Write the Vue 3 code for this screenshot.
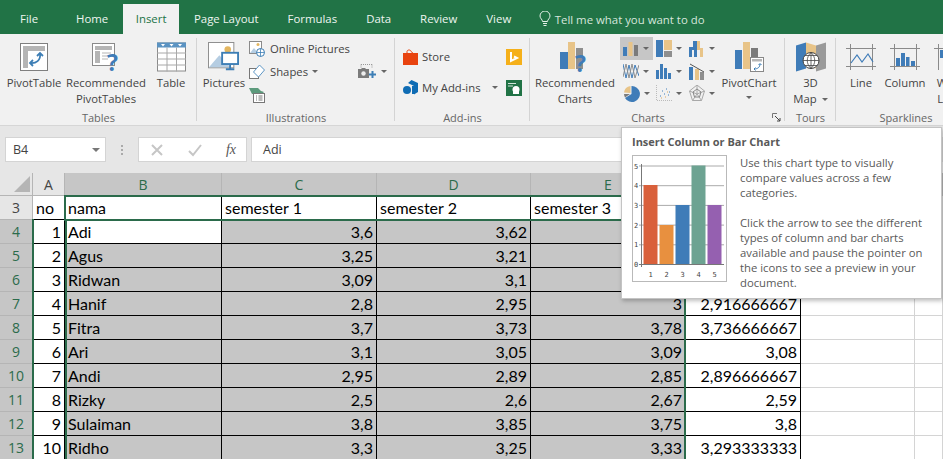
<script setup>
const tabs = ['File', 'Home', 'Insert', 'Page Layout', 'Formulas', 'Data', 'Review', 'View']
const cols = ['A', 'B', 'C', 'D', 'E', 'F', 'G', 'H']
const rows = [
  ['1', 'Adi', '3,6', '3,62', '', ''],
  ['2', 'Agus', '3,25', '3,21', '', ''],
  ['3', 'Ridwan', '3,09', '3,1', '', ''],
  ['4', 'Hanif', '2,8', '2,95', '3', '2,916666667'],
  ['5', 'Fitra', '3,7', '3,73', '3,78', '3,736666667'],
  ['6', 'Ari', '3,1', '3,05', '3,09', '3,08'],
  ['7', 'Andi', '2,95', '2,89', '2,85', '2,896666667'],
  ['8', 'Rizky', '2,5', '2,6', '2,67', '2,59'],
  ['9', 'Sulaiman', '3,8', '3,85', '3,75', '3,8'],
  ['10', 'Ridho', '3,3', '3,25', '3,33', '3,293333333']
]
const bars = [
  { x: 11.5, y: 30, c: '#d9603b' },
  { x: 27.5, y: 70, c: '#e8903f' },
  { x: 43.5, y: 50, c: '#3f7cb8' },
  { x: 59.5, y: 10.5, c: '#6da392' },
  { x: 75.5, y: 50, c: '#9560b0' }
]
</script>

<template>
  <div class="app">
    <nav class="tabs">
      <span
        v-for="t in tabs"
        :key="t"
        class="tab"
        :class="{ active: t === 'Insert', first: t === 'File' }"
      >{{ t }}</span>
      <span class="tell">
        <svg width="12" height="16" viewBox="0 0 12 16" fill="none" stroke="#e4efe8" stroke-width="1">
          <path d="M3.5 10.5C3.5 8.5 1 7.5 1 5a5 5 0 0 1 10 0c0 2.500-2.500 3.500-2.500 5.500z" />
          <path d="M4 12.500h4M4.500 14.500h3" />
        </svg>
        Tell me what you want to do
      </span>
    </nav>

    <section class="ribbon">
      <div class="group g-tables">
        <div class="body">
          <div class="big w60">
            <svg class="ic" width="30" height="30" viewBox="0 0 30 30">
              <rect x="1.500" y="1.500" width="27" height="27" fill="#fff" stroke="#7f7f7f" />
              <rect x="4" y="4" width="22" height="5" fill="#b5b5b5" />
              <rect x="4" y="9" width="5" height="17" fill="#b5b5b5" />
              <path d="M11 21c6 1 11-3 10-9M18 14l3-3 3 3M14 18l-3 3 3 3" fill="none" stroke="#3d7eb5" stroke-width="1.800" />
            </svg>
            <span>PivotTable</span>
          </div>
          <div class="big w84">
            <svg class="ic" width="30" height="30" viewBox="0 0 30 30">
              <rect x="1.500" y="1.500" width="22" height="22" fill="#fff" stroke="#8a8a8a" />
              <rect x="4" y="4" width="17" height="4" fill="#b5b5b5" />
              <rect x="4" y="9" width="5" height="12" fill="#b5b5b5" />
              <path d="M11 11h9M11 14h9M11 17h6" stroke="#b5b5b5" />
              <text x="16" y="29" class="qm">?</text>
            </svg>
            <span>Recommended<br />PivotTables</span>
          </div>
          <div class="big w46">
            <svg class="ic" width="29" height="29" viewBox="0 0 29 29">
              <rect x="0.500" y="0.500" width="28" height="28" fill="#fff" stroke="#8a8a8a" />
              <rect x="0" y="0" width="29" height="5" fill="#5b93c2" />
              <path d="M4 1.500h4l-2 2.500zM12.500 1.500h4l-2 2.500zM21 1.500h4l-2 2.500z" fill="#fff" />
              <path d="M0 10.500h29M0 16.500h29M0 22.500h29M10 5v24M19.500 5v24" stroke="#a8a8a8" />
            </svg>
            <span>Table</span>
          </div>
        </div>
        <div class="glabel">Tables</div>
      </div>

      <div class="group g-illus">
        <div class="body">
          <div class="big w50">
            <svg class="ic" width="34" height="32" viewBox="0 0 34 32">
              <rect x="0.500" y="0.500" width="27" height="27" fill="#fff" stroke="#8a8a8a" />
              <circle cx="21" cy="8" r="3.500" fill="#e3b660" />
              <path d="M1 27l11-13 12 13z" fill="#b5cde2" />
              <rect x="15" y="11.500" width="17" height="12" fill="#fff" stroke="#3d7eb5" stroke-width="2" />
              <path d="M23.500 24v4M19 29h9" stroke="#3d7eb5" stroke-width="2" />
            </svg>
            <span>Pictures</span>
          </div>
          <div class="small-col">
            <div class="small">
              <svg width="16" height="16" viewBox="0 0 16 16">
                <rect x="0.500" y="0.500" width="12" height="12" fill="#fff" stroke="#8a8a8a" />
                <circle cx="9" cy="3.500" r="1.500" fill="#e3b660" />
                <path d="M1 12l4-5 4 5z" fill="#b5cde2" />
                <circle cx="11.500" cy="11.500" r="4" fill="#fff" stroke="#3d7eb5" />
                <path d="M7.500 11.500h8M11.500 7.500v8" stroke="#3d7eb5" stroke-width=".8" />
              </svg>
              Online Pictures
            </div>
            <div class="small">
              <svg width="16" height="16" viewBox="0 0 16 16" fill="#fff">
                <rect x="0.500" y="4.500" width="9" height="10" stroke="#777" />
                <path d="M10.500 1l5 5-6 7-5-5z" stroke="#5d95c4" />
              </svg>
              Shapes<i class="caret shapes-caret" />
            </div>
            <div class="small">
              <svg width="16" height="16" viewBox="0 0 16 16">
                <path d="M0 1h9l3 3 3 1-2 2H3z" fill="#5c9a7c" />
                <rect x="4.500" y="6.500" width="11" height="9" fill="#fff" stroke="#777" />
                <path d="M7 9h1M7 11h1M7 13h1M9.500 9h4M9.500 11h4M9.500 13h4" stroke="#777" />
              </svg>
            </div>
          </div>
          <div class="shot">
            <svg width="18" height="15" viewBox="0 0 18 15">
              <path d="M3 .5h11M3 .5v3M14 .5v3" stroke="#999" stroke-dasharray="1 1" fill="none" />
              <path d="M0 5h3l1-1h3l1 1h3v9H0z" fill="#7b7b7b" />
              <circle cx="5.500" cy="9.500" r="2.200" fill="#eee" />
              <path d="M11 10.500h7M14.500 7v7" stroke="#3d7eb5" stroke-width="2" />
            </svg>
            <i class="caret" />
          </div>
        </div>
        <div class="glabel">Illustrations</div>
      </div>

      <div class="group g-addins">
        <div class="body addins">
          <div class="addin-row">
            <svg width="15" height="16" viewBox="0 0 15 16">
              <path d="M0 4h15v12H0z" fill="#e8430f" />
              <path d="M4 5V2.500C4 .5 8 .5 8 2.500L11 5" fill="none" stroke="#e8430f" />
            </svg>
            <span>Store</span>
          </div>
          <svg width="16" height="16" viewBox="0 0 16 16">
            <rect width="16" height="16" fill="#f5b01a" />
            <path d="M5 3v9l6-3-3-1.500" fill="none" stroke="#fff" stroke-width="2" />
          </svg>
          <div class="addin-row">
            <svg width="15" height="15" viewBox="0 0 15 15" fill="#0f6cb4">
              <path d="M8.500 0L15 3v9l-4 2.500V6L5 3z" />
              <circle cx="4" cy="10" r="4" />
              <rect x="9" y="6" width="3" height="8" />
            </svg>
            <span>My Add-ins</span>
            <i class="caret addin-caret" />
          </div>
          <svg width="16" height="16" viewBox="0 0 16 16">
            <rect width="16" height="16" fill="#217346" />
            <path d="M2 3.500h8M2 6h5" stroke="#cfe3d7" />
            <circle cx="10" cy="9.500" r="3.500" fill="#fff" />
            <rect x="7" y="11" width="6" height="3" fill="#fff" />
          </svg>
        </div>
        <div class="glabel">Add-ins</div>
      </div>

      <div class="group g-charts">
        <div class="body">
          <div class="big w90">
            <svg class="ic" width="30" height="30" viewBox="0 0 30 30">
              <rect x="0" y="10" width="8" height="17" fill="#3f7cb8" />
              <rect x="8" y="0" width="7" height="27" fill="#e8c488" />
              <rect x="16" y="6" width="7" height="21" fill="#8f8f8f" />
              <text x="15" y="30" class="qm">?</text>
            </svg>
            <span>Recommended<br />Charts</span>
          </div>
          <div class="chart-grid">
            <div class="cg hl">
              <svg width="16" height="14" viewBox="0 0 16 14">
                <rect x="0" y="5" width="4" height="9" fill="#3f7cb8" />
                <rect x="5.500" y="0" width="4" height="14" fill="#e8c488" />
                <rect x="11" y="3" width="4" height="11" fill="#7b7b7b" />
              </svg>
              <i class="caret" />
            </div>
            <div class="cg">
              <svg width="16" height="17" viewBox="0 0 16 17">
                <rect x="0" y="0" width="7" height="17" fill="#3f7cb8" />
                <rect x="8" y="0" width="8" height="10" fill="#e8c488" />
                <rect x="8" y="11" width="8" height="6" fill="#8f8f8f" />
              </svg>
              <i class="caret" />
            </div>
            <div class="cg">
              <svg width="16" height="16" viewBox="0 0 16 16">
                <path d="M0 16V6h4V0h4v16H5V9H3v7z" fill="#3f7cb8" />
                <path d="M8 0h3v7h3v9h-3V9H8z" fill="#e8c488" />
              </svg>
              <i class="caret" />
            </div>
            <div class="cg">
              <svg width="16" height="16" viewBox="0 0 16 16" fill="none">
                <path d="M0 1l3 14 3-13 3 13 3-13 4 11" stroke="#3f7cb8" />
                <path d="M0 14l3-13 3 14 3-14 3 14 4-13" stroke="#8f8f8f" />
              </svg>
              <i class="caret" />
            </div>
            <div class="cg">
              <svg width="16" height="15" viewBox="0 0 16 15" fill="#3f7cb8">
                <rect x="0" y="6" width="3" height="9" />
                <rect x="4" y="0" width="3" height="15" />
                <rect x="8" y="4" width="3" height="11" />
                <rect x="12" y="9" width="3" height="6" />
              </svg>
              <i class="caret" />
            </div>
            <div class="cg">
              <svg width="16" height="17" viewBox="0 0 16 17">
                <rect x="0" y="4" width="4" height="13" fill="#3f7cb8" />
                <rect x="6" y="6" width="4" height="11" fill="#e8c488" />
                <rect x="11" y="9" width="4" height="8" fill="#8f8f8f" />
                <path d="M1 1l7 4 7 4" stroke="#555" fill="none" />
              </svg>
              <i class="caret" />
            </div>
            <div class="cg">
              <svg width="17" height="17" viewBox="0 0 17 17">
                <path d="M8.500 1A8 8 0 1 1 2 13L8.500 9z" fill="#3f7cb8" />
                <path d="M7.500 8V1A7.500 7.500 0 0 0 1 7.500z" fill="#e8c488" />
                <path d="M1 9h6l-5 3.500A8 8 0 0 1 1 9z" fill="#7b7b7b" />
              </svg>
              <i class="caret" />
            </div>
            <div class="cg">
              <svg width="16" height="16" viewBox="0 0 16 16">
                <path d="M.5 0v15.500H16" stroke="#bbb" fill="none" stroke-dasharray="1 1" />
                <path d="M4 11h1M6 6h1M8 9h1M10 4h1M12 10h1M13 7h1" stroke="#3f7cb8" />
                <path d="M5 13h1M9 12h1M11 7h1" stroke="#d9a860" />
              </svg>
              <i class="caret" />
            </div>
            <div class="cg">
              <svg width="16" height="16" viewBox="0 0 16 16" fill="none" stroke="#a8a8a8">
                <path d="M8 0l7.500 6-3 9.500h-9L.5 6z" />
                <path d="M8 0v9M.5 6L8 9l7.500-3M3.500 15.500L8 9l4.500 6.500" />
                <path d="M8 4l4 3-1.500 5h-5L4 7z" stroke="#888" />
              </svg>
              <i class="caret" />
            </div>
          </div>
          <div class="big w60">
            <svg class="ic" width="30" height="30" viewBox="0 0 30 30">
              <rect x="1" y="8" width="7" height="19" fill="#3f7cb8" />
              <rect x="9" y="0" width="7" height="27" fill="#e8c488" />
              <rect x="17" y="6" width="7" height="21" fill="#7b7b7b" />
              <rect x="16.500" y="15.500" width="13" height="14" fill="#fff" stroke="#888" />
              <rect x="18" y="17" width="10" height="2.500" fill="#b5b5b5" />
              <path d="M20 27c4 0 6-2 6-5M24.500 23l1.500-1.500 1.500 1.500M21.500 25.500L20 27l1.500 1.500" fill="none" stroke="#3d7eb5" />
            </svg>
            <span>PivotChart</span>
            <i class="caret pivot-caret" />
          </div>
        </div>
        <div class="glabel charts-label">Charts</div>
        <svg class="launcher" width="9" height="9" viewBox="0 0 9 9" fill="none" stroke="#777">
          <path d="M.5 5V.5H5" />
          <path d="M3 3l5 5M8 5v3H5" stroke="#444" />
        </svg>
      </div>

      <div class="group g-tours">
        <div class="body">
          <div class="big w51">
            <svg class="ic" width="30" height="29" viewBox="0 0 30 29">
              <path d="M0 3l10-3v26L0 29z" fill="#3f7cb8" />
              <path d="M10 0l10 3v23l-10-3z" fill="#e8c488" />
              <path d="M20 3l10-3v26l-10 3z" fill="#9a9a9a" />
              <circle cx="15" cy="18" r="8" fill="#fff" stroke="#444" />
              <path d="M7 18h16M15 10v16M9 13h12M9 23h12M15 10c-5 5-5 11 0 16M15 10c5 5 5 11 0 16" fill="none" stroke="#444" stroke-width=".8" />
            </svg>
            <span>3D<br />Map<i class="caret" /></span>
          </div>
        </div>
        <div class="glabel">Tours</div>
      </div>

      <div class="group g-spark">
        <div class="body">
          <div class="big w44 spark-first">
            <svg class="ic" width="30" height="26" viewBox="0 0 30 26" fill="none">
              <path d="M0 4.500h30M0 22.500h30M4.500 0v26M26.500 0v26" stroke="#8a8a8a" />
              <path d="M5 19l6-8 5 7 6-8 5 8" stroke="#3f7cb8" stroke-width="1.200" />
            </svg>
            <span>Line</span>
          </div>
          <div class="big w44">
            <svg class="ic" width="30" height="26" viewBox="0 0 30 26">
              <path d="M0 4.500h30M0 22.500h30M4.500 0v26M26.500 0v26" stroke="#8a8a8a" fill="none" />
              <rect x="6" y="14" width="4" height="8" fill="#3f7cb8" />
              <rect x="11" y="9" width="4" height="13" fill="#3f7cb8" />
              <rect x="16" y="13" width="3.500" height="9" fill="#3f7cb8" />
              <rect x="21" y="17" width="4" height="5" fill="#3f7cb8" />
            </svg>
            <span>Column</span>
          </div>
          <div class="big w44">
            <svg class="ic" width="30" height="26" viewBox="0 0 30 26">
              <path d="M0 4.500h30M4.500 0v26" stroke="#8a8a8a" fill="none" />
              <rect x="6" y="6" width="4" height="8" fill="#3f7cb8" />
            </svg>
            <span>Win/<br />Loss</span>
          </div>
        </div>
        <div class="glabel">Sparklines</div>
      </div>
    </section>

    <section class="fbar">
      <div class="namebox">B4<i class="caret" /></div>
      <div class="dots"><i /><i /><i /></div>
      <div class="fx-box">
        <svg width="14" height="14" viewBox="0 0 14 14"><path d="M2 2l10 10M12 2L2 12" stroke="#c6c6c6" stroke-width="2" /></svg>
        <svg width="14" height="14" viewBox="0 0 14 14"><path d="M1 8l4 4 8-10" fill="none" stroke="#c6c6c6" stroke-width="2" /></svg>
        <em>fx</em>
      </div>
      <div class="finput">Adi</div>
    </section>

    <section class="sheet">
      <div class="corner"><i /></div>
      <div
        v-for="c in cols"
        :key="c"
        class="ch"
        :class="{ sel: 'BCDE'.includes(c) }"
      >{{ c === 'H' ? '' : c }}</div>

      <div class="rh">3</div>
      <div class="cell tl">no</div>
      <div class="cell tl">nama</div>
      <div class="cell tl">semester 1</div>
      <div class="cell tl">semester 2</div>
      <div class="cell tl">semester 3</div>
      <div class="cell" />
      <div class="cell light" />
      <div class="cell light" />

      <template v-for="(r, i) in rows" :key="r[0]">
        <div class="rh sel">{{ i + 4 }}</div>
        <div class="cell">{{ r[0] }}</div>
        <div class="cell tl" :class="{ grey: i > 0 }">{{ r[1] }}</div>
        <div class="cell grey">{{ r[2] }}</div>
        <div class="cell grey">{{ r[3] }}</div>
        <div class="cell grey">{{ r[4] }}</div>
        <div class="cell">{{ r[5] }}</div>
        <div class="cell light" />
        <div class="cell light" />
      </template>

      <div class="mark mark-head" />
      <div class="mark mark-a" />
      <div class="mark mark-b" />
    </section>

    <aside class="tip">
      <div class="tip-title">Insert Column or Bar Chart</div>
      <div class="tip-main">
        <svg class="tip-chart" width="95" height="127" viewBox="0 0 95 127">
          <rect x="0.500" y="0.500" width="94" height="126" fill="#fff" stroke="#b9b9b9" />
          <path
            v-for="n in 5"
            :key="n"
            :d="`M7 ${109.5 - n * 19.7}H92`"
            stroke="#aaa"
          />
          <path d="M9.500 9V112M7 109.500H92" stroke="#777" fill="none" />
          <rect
            v-for="b in bars"
            :key="b.x"
            :x="b.x"
            :y="b.y"
            width="14"
            :height="109 - b.y"
            :fill="b.c"
          />
          <text v-for="n in 6" :key="'y' + n" x="2" :y="112 - (n - 1) * 19.7" class="tick">{{ n - 1 }}</text>
          <text v-for="n in 5" :key="'x' + n" :x="16.500 + (n - 1) * 16" y="122" class="tick">{{ n }}</text>
        </svg>
        <div class="tip-text">
          <p>Use this chart type to visually compare values across a few categories.</p>
          <p>Click the arrow to see the different types of column and bar charts available and pause the pointer on the icons to see a preview in your document.</p>
        </div>
      </div>
    </aside>
  </div>
</template>

<style>
html, body { margin: 0; overflow: hidden; background: #fff; }
</style>

<style scoped>
.app {
  position: relative;
  width: 943px;
  height: 459px;
  overflow: hidden;
  font-family: "Open Sans", "Noto Sans", sans-serif;
  font-size: 11.300px;
  color: #444;
}
.tabs {
  display: flex;
  align-items: flex-end;
  height: 34px;
  background: #217346;
  color: #eef5f1;
  box-sizing: border-box;
  font-size: 11.400px;
}
.tab {
  height: 30px;
  line-height: 30px;
  padding: 0 14.500px;
  box-sizing: border-box;
}
.tab.first { padding-left: 20px; padding-right: 23.500px; }
.tab.active { background: #f1f1f1; color: #217346; padding: 0 13px; }
.tell {
  display: flex;
  align-items: center;
  gap: 4px;
  height: 30px;
  margin-left: 13px;
  color: #d6e6dc;
}
.ribbon {
  display: flex;
  height: 92px;
  background: #f1f1f1;
  border-bottom: 1px solid #d6d6d6;
  box-sizing: border-box;
  overflow: hidden;
  line-height: 16px;
}
.group {
  position: relative;
  flex: none;
  display: flex;
  flex-direction: column;
  box-sizing: border-box;
}
.group::after {
  content: "";
  position: absolute;
  right: 0;
  top: 4px;
  bottom: 4px;
  width: 1px;
  background: #d4d4d4;
}
.g-tables { width: 197px; }
.g-illus { width: 198px; }
.g-addins { width: 135px; }
.g-charts { width: 255px; }
.g-tours { width: 51px; }
.g-spark { width: 140px; }
.g-spark::after { display: none; }
.g-tables .body { padding-left: 4px; }
.g-illus .body { padding-left: 2px; }
.body {
  flex: none;
  height: 76px;
  display: flex;
  padding-top: 3px;
  box-sizing: border-box;
}
.glabel {
  height: 15px;
  line-height: 15px;
  text-align: center;
  color: #666;
  font-size: 11px;
}
.charts-label { padding-right: 19px; }
.big {
  flex: none;
  display: flex;
  flex-direction: column;
  align-items: center;
  text-align: center;
  color: #444;
  white-space: nowrap;
}
.ic { flex: none; height: 30px; margin: 5px 0 3px; overflow: visible; }
.w44 { width: 44px; }
.w46 { width: 46px; }
.w50 { width: 50px; }
.w51 { width: 51px; }
.w60 { width: 60px; }
.w84 { width: 84px; }
.w90 { width: 90px; }
.spark-first { margin-left: 3px; }
.qm {
  font-family: "Open Sans", sans-serif;
  font-size: 23px;
  font-weight: 700;
  fill: #3f7cb8;
}
.small-col { width: 109px; }
.small {
  display: flex;
  align-items: center;
  gap: 5px;
  height: 23px;
  white-space: nowrap;
}
.caret {
  display: inline-block;
  width: 0;
  height: 0;
  margin-left: 5px;
  border-left: 3px solid transparent;
  border-right: 3px solid transparent;
  border-top: 3px solid #666;
  vertical-align: middle;
}
.shapes-caret { margin-left: -1px; }
.shot {
  display: flex;
  align-items: center;
  height: 23px;
  margin-top: 23px;
}
.addins {
  display: grid;
  grid-template-columns: 103px 16px;
  grid-auto-rows: 31px;
  padding: 7px 0 0 8px;
  align-items: center;
}
.addin-row { display: flex; align-items: center; gap: 4px; white-space: nowrap; }
.addin-caret { margin-left: 7px; }
.chart-grid {
  flex: none;
  display: grid;
  grid-template-columns: repeat(3, 33px);
  grid-template-rows: 23px 22px 22px;
}
.cg {
  display: flex;
  align-items: center;
  padding-left: 3px;
}
.cg .caret { margin-left: 4px; }
.hl { background: #c6c6c6; }
.pivot-caret { margin: 5px 0 0; }
.launcher { position: absolute; right: 4px; bottom: 3px; }
.fbar {
  display: flex;
  align-items: center;
  height: 47px;
  padding-left: 5px;
  background: #e6e6e6;
  box-sizing: border-box;
}
.namebox, .fx-box, .finput {
  height: 25px;
  background: #fff;
  border: 1px solid #d4d4d4;
  box-sizing: border-box;
  display: flex;
  align-items: center;
  font-size: 12.500px;
}
.namebox {
  width: 101px;
  padding-left: 7px;
  justify-content: space-between;
}
.namebox .caret {
  margin-right: 5px;
  border-left-width: 4px;
  border-right-width: 4px;
  border-top-width: 4px;
  border-top-color: #777;
}
.dots {
  display: flex;
  flex-direction: column;
  gap: 2px;
  width: 32px;
  align-items: center;
}
.dots i { width: 2px; height: 2px; background: #aaa; }
.fx-box {
  width: 109px;
  justify-content: space-between;
  padding: 0 10px 0 11px;
}
.fx-box em {
  font-family: "Liberation Serif", serif;
  font-size: 14px;
  color: #555;
}
.finput {
  flex: 1;
  margin-left: 4px;
  padding-left: 11px;
}
.sheet {
  position: relative;
  display: grid;
  grid-template-columns: 33px 32px 157px 155px 154px 155px 115px 114px 28px;
  grid-template-rows: 23px repeat(11, 24px);
  font-family: "Lato", "Liberation Sans", sans-serif;
  font-size: 16px;
  color: #000;
}
.corner {
  background: #e6e6e6;
  border-right: 1px solid #b5b5b5;
  border-bottom: 1px solid #b5b5b5;
  box-sizing: border-box;
  padding: 3px 0 0 14px;
}
.corner i {
  display: block;
  width: 0;
  height: 0;
  border-bottom: 16px solid #b5b5b5;
  border-left: 16px solid transparent;
}
.ch, .rh {
  display: flex;
  align-items: center;
  justify-content: center;
  background: #e6e6e6;
  border-right: 1px solid #b5b5b5;
  border-bottom: 1px solid #b5b5b5;
  box-sizing: border-box;
  font-family: "Open Sans", sans-serif;
  font-size: 14px;
  color: #444;
}
.ch.sel, .rh.sel { background: #c6c6c6; color: #2b6b4b; }
.cell {
  display: flex;
  align-items: center;
  justify-content: flex-end;
  padding: 0 3px;
  background: #fff;
  border-right: 1px solid #000;
  border-bottom: 1px solid #000;
  box-sizing: border-box;
  white-space: nowrap;
}
.cell.tl { justify-content: flex-start; }
.cell.grey { background: #c6c6c6; }
.cell.light {
  border-right-color: #d4d4d4;
  border-bottom-color: #d4d4d4;
}
.mark { position: absolute; pointer-events: none; box-sizing: border-box; }
.mark-head {
  left: 64px;
  top: 22px;
  width: 622px;
  height: 26px;
  border: solid #2b6b4b;
  border-width: 2px 0 2px 2px;
}
.mark-a {
  left: 32px;
  top: 46px;
  width: 35px;
  height: 240px;
  border: solid #2b6b4b;
  border-width: 0 2px;
}
.mark-b {
  left: 684px;
  top: 46px;
  width: 2px;
  height: 240px;
  background: #2b6b4b;
}
.tip {
  position: absolute;
  left: 621px;
  top: 127px;
  width: 321px;
  height: 172px;
  box-sizing: border-box;
  padding: 6px 10px 0;
  background: #fff;
  border: 1px solid #c4c4c4;
  box-shadow: 1px 2px 4px rgba(0, 0, 0, .25);
  color: #595959;
  line-height: 15px;
}
.tip-title { height: 21px; line-height: 15px; font-weight: 700; font-size: 11px; }
.tip-main { display: flex; gap: 13px; }
.tip-chart { flex: none; }
.tip-text { flex: 1; }
.tip-text p { margin: 0 0 15px; }
.tick {
  font-family: "DejaVu Sans Mono", monospace;
  font-size: 7px;
  fill: #444;
}
</style>
